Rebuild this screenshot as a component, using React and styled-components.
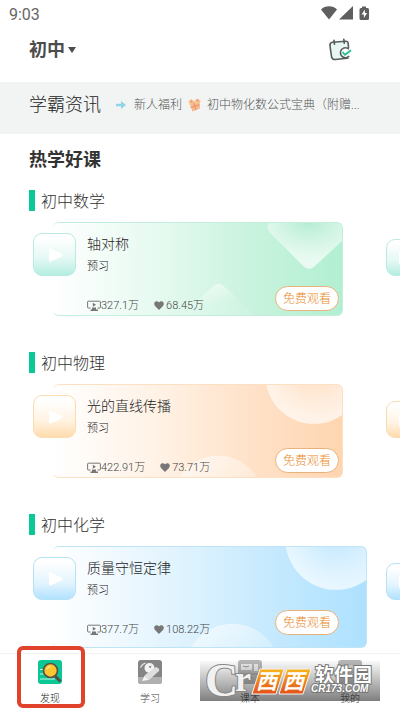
import React, { useState } from "react";
import styled, { createGlobalStyle } from "styled-components";

const themes = {
  green: {
    card: "linear-gradient(90deg, #ffffff 0%, #e3f9ee 40%, #c9f3de 68%, #b2efd2 100%)",
    line: "#c3eede",
    cover: "linear-gradient(180deg, #ffffff 10%, #e4f8f4 60%, #b4eee0 100%)",
    coverLine: "#b9ebe2",
    glow: "#b5edd2",
  },
  orange: {
    card: "linear-gradient(90deg, #ffffff 0%, #fff0e2 40%, #ffe2c9 68%, #fed5b0 100%)",
    line: "#fbe0c4",
    cover: "linear-gradient(180deg, #ffffff 10%, #fff3e2 60%, #ffdcae 100%)",
    coverLine: "#fbdcae",
    glow: "#ffd9b8",
  },
  blue: {
    card: "linear-gradient(90deg, #ffffff 0%, #e0f3fe 40%, #c7eafe 68%, #ade1ff 100%)",
    line: "#bfe4f5",
    cover: "linear-gradient(180deg, #ffffff 10%, #e3f4fe 60%, #b2e2ff 100%)",
    coverLine: "#b5e2f5",
    glow: "#b5e3fe",
  },
};

const courses = [
  {
    subject: "初中数学",
    title: "轴对称",
    tag: "预习",
    views: "327.1万",
    likes: "68.45万",
    color: "green",
  },
  {
    subject: "初中物理",
    title: "光的直线传播",
    tag: "预习",
    views: "422.91万",
    likes: "73.71万",
    color: "orange",
  },
  {
    subject: "初中化学",
    title: "质量守恒定律",
    tag: "预习",
    views: "377.7万",
    likes: "108.22万",
    color: "blue",
    wide: true,
  },
];

const App = () => {
  const [grade, setGrade] = useState("初中");
  return (
    <>
      <GlobalStyle />
      <Page>
        <StatusBar>
          <span>9:03</span>
          <StatusIcons />
        </StatusBar>
        <Header>
          <GradePicker>
            <select
              aria-label="年级"
              value={grade}
              onChange={(e) => setGrade(e.target.value)}
            >
              <option>小学</option>
              <option>初中</option>
              <option>高中</option>
            </select>
            <svg width="8" height="6" viewBox="0 0 8 6">
              <path d="M0 0H8L4 6Z" fill="#4c4c4c" />
            </svg>
          </GradePicker>
          <IconButton aria-label="签到">
            <CalendarIcon />
          </IconButton>
        </Header>
        <News>
          <h2>学霸资讯</h2>
          <NewsLink href="#news">
            <ArrowIcon />
            <span>新人福利</span>
            <GiftIcon />
            <NewsText>初中物化数公式宝典（附赠...</NewsText>
          </NewsLink>
        </News>
        <Main>
          <h1>热学好课</h1>
          {courses.map((course) => (
            <Course course={course} key={course.subject} />
          ))}
        </Main>
        <BottomNav />
      </Page>
    </>
  );
};

const Course = ({ course }) => {
  const theme = themes[course.color];
  return (
    <Section>
      <h3>{course.subject}</h3>
      <Slider>
        <Cover $theme={theme} aria-label="播放">
          <PlayIcon />
        </Cover>
        <Card $theme={theme} $wide={course.wide}>
          <CardArt color={course.color} glow={theme.glow} />
          <CardTitle>{course.title}</CardTitle>
          <CardTag>{course.tag}</CardTag>
          <Stats>
            <ViewsIcon />
            <span>{course.views}</span>
            <HeartIcon />
            <span>{course.likes}</span>
            <WatchButton>免费观看</WatchButton>
          </Stats>
        </Card>
        <NextCover $theme={theme} aria-label="下一课">
          <PlayIcon />
        </NextCover>
      </Slider>
    </Section>
  );
};

const BottomNav = () => {
  return (
    <Nav>
      <NavItem href="#discover" $active>
        <DiscoverIcon />
        <span>发现</span>
        <Highlight />
      </NavItem>
      <NavItem href="#study">
        <StudyIcon />
        <span>学习</span>
      </NavItem>
      <NavItem href="#books">
        <BookIcon />
        <span>课本</span>
      </NavItem>
      <NavItem href="#me">
        <MeIcon />
        <span>我的</span>
      </NavItem>
      <Watermark>
        <WatermarkLogo />
      </Watermark>
    </Nav>
  );
};

//Icons
const StatusIcons = () => (
  <svg width="50" height="16" viewBox="0 0 50 16" fill="#5f5f5f">
    <path d="M1 4.5C5 0.2 13 0.2 17 4.5L9 14.5Z" />
    <path d="M19 14.5L33 1V14.5Z" />
    <path d="M42 1.5h4v1.500h1.500q1.500 0 1.500 1.500v9q0 1.500-1.500 1.500h-6.500q-1.500 0-1.500-1.500v-9q0-1.500 1.500-1.500h1z" />
    <path d="M44.900 4.500L41.600 9.400H43.900V13L47.100 8H44.900Z" fill="#fff" />
  </svg>
);

const CalendarIcon = () => (
  <svg width="24" height="24" viewBox="0 0 24 24" fill="none">
    <path
      d="M4.500 4.300L17.500 3.200Q20 3 20.200 5.500L21 17.500Q21.200 20 18.800 20.300L7.500 21.500Q4.300 21.800 3.600 19L2 8Q1.700 4.600 4.500 4.300Z"
      fill="#e8f7f4"
      stroke="#555c5b"
      strokeWidth="1.600"
    />
    <path
      d="M6 2.200L6.500 6.300M15.800 1.200L16.300 5.300"
      stroke="#555c5b"
      strokeWidth="1.600"
      strokeLinecap="round"
    />
    <path d="M17.500 10H24V20H17.500Z" fill="#fff" />
    <path
      d="M21 11.200A5 5 0 1 0 21.200 18"
      fill="#fff"
      stroke="#555c5b"
      strokeWidth="1.600"
    />
    <path d="M14.500 14.200L17 16.800L23 12.200" stroke="#1fc397" strokeWidth="1.900" />
  </svg>
);

const ArrowIcon = () => (
  <svg width="10" height="8" viewBox="0 0 10 8">
    <path d="M0 2.800H5V0L10 4L5 8V5.200H0Z" fill="#8fd3e6" />
  </svg>
);

const GiftIcon = () => (
  <svg width="13" height="14" viewBox="0 0 13 14">
    <path d="M1.500 5.500L11.500 4L12 10.500L4.500 13.500Z" fill="#f6b98a" />
    <path d="M0.500 3L3.500 1L6 3.500L9 0.500L12.500 2.500L12 5L2 7.500Z" fill="#f8c58f" />
    <path d="M5.500 4.500L8 12M2.500 9.500L11.500 6.800" stroke="#ea8f72" />
    <circle cx="3.500" cy="3.500" r="1" fill="#ea8f72" />
    <circle cx="9.500" cy="2.500" r="1" fill="#ea8f72" />
  </svg>
);

const PlayIcon = () => (
  <svg width="16" height="16" viewBox="0 0 16 16">
    <path
      d="M1 2.800Q1 1 2.700 1.600L14 6.800Q16 8 14 9.200L2.700 14.400Q1 15 1 13.200Z"
      fill="#fff"
    />
  </svg>
);

const ViewsIcon = () => (
  <svg width="14" height="12" viewBox="0 0 14 12" fill="none">
    <path
      d="M3.500 8H1.200Q0.600 8 0.600 7.400V2Q0.600 1.200 1.400 1.200H12.600Q13.400 1.200 13.400 2V7.400Q13.400 8 12.800 8H10.500"
      stroke="#777"
    />
    <path d="M5.800 2.800L9 4.800L5.800 6.800Z" fill="#777" />
    <path d="M5 7.500H9V9.500H11V11H3.500V9.500H5Z" fill="#777" />
  </svg>
);

const HeartIcon = () => (
  <svg width="10" height="9" viewBox="0 0 10 9">
    <path
      d="M5 9L1 5C-0.600 3 0.300 0.300 2.600 0.200C3.800 0.200 4.500 0.800 5 1.500C5.500 0.800 6.200 0.200 7.400 0.200C9.700 0.300 10.600 3 9 5Z"
      fill="#777"
    />
  </svg>
);

const CardArt = ({ color, glow }) => {
  const box = color === "blue" ? "0 0 314 101" : "0 0 290 94";
  return (
    <Art viewBox={box} preserveAspectRatio="xMaxYMin slice" aria-hidden="true">
      <defs>
        <radialGradient id={"top-" + color} cx="0.55" cy="0" r="0.85">
          <stop offset="0" stopColor={glow} />
          <stop offset="1" stopColor="#fff" stopOpacity="0.7" />
        </radialGradient>
        <radialGradient id={"ball-" + color} cx="0.5" cy="0.4" r="0.6">
          <stop offset="0" stopColor={glow} />
          <stop offset="1" stopColor="#fff" stopOpacity="0.7" />
        </radialGradient>
        <linearGradient id={"low-" + color} x1="0" y1="0" x2="0.4" y2="1">
          <stop offset="0" stopColor="#fff" stopOpacity="0.65" />
          <stop offset="0.700" stopColor="#fff" stopOpacity="0.1" />
        </linearGradient>
      </defs>
      {color === "green" && (
        <>
          <path
            d="M216 0Q214 5 217 9L252 44Q257 48 262 44L290 18V0Z"
            fill="url(#top-green)"
          />
          <path d="M128 94L161 63Q166 59 171 63L204 94Z" fill="url(#low-green)" />
        </>
      )}
      {color === "orange" && (
        <>
          <circle cx="262" cy="-10" r="49" fill="url(#ball-orange)" />
          <circle cx="166" cy="117" r="46" fill="url(#low-orange)" />
        </>
      )}
      {color === "blue" && (
        <>
          <circle cx="284" cy="-8" r="51" fill="url(#ball-blue)" />
          <circle cx="180" cy="125" r="48" fill="url(#low-blue)" />
        </>
      )}
    </Art>
  );
};

const DiscoverIcon = () => (
  <svg width="24" height="24" viewBox="0 0 24 24" fill="none">
    <rect width="24" height="24" rx="3" fill="#09c895" />
    <path d="M2 9.500H6M2 14H7M2 19H17" stroke="#c9f5e8" strokeWidth="1.200" />
    <path d="M17 16L22.500 21.500" stroke="#5a4a45" strokeWidth="3" />
    <circle cx="12.500" cy="10.500" r="7" fill="#fdc62f" stroke="#5c5148" strokeWidth="1.700" />
    <path d="M9 9Q10 6.800 12.500 6.500" stroke="#fff0b8" strokeWidth="1.200" />
  </svg>
);

const StudyIcon = () => (
  <svg width="24" height="24" viewBox="0 0 24 24" fill="none">
    <rect width="24" height="24" rx="3" fill="#858585" />
    <path d="M0 17H24V21Q24 24 21 24H3Q0 24 0 21Z" fill="#b0b0b0" />
    <path d="M2.500 7.500Q4 4 7.500 3" stroke="#e8e8e8" strokeWidth="1.300" />
    <circle cx="11.500" cy="8" r="5" fill="#f3f3f3" />
    <path d="M10.500 6.500L13.500 5.500L12.500 8.500Z" fill="#8a8a8a" />
    <path d="M18 7Q22 8 21 11L11 20L5 20L7 15Z" fill="#dedede" />
    <path d="M4 21L6.500 16L10 20Z" fill="#f5f5f5" />
  </svg>
);

const BookIcon = () => (
  <svg width="24" height="24" viewBox="0 0 24 24" fill="none">
    <rect width="24" height="24" rx="3" fill="#b4b4b4" />
    <path d="M3 4H14V10H3ZM16 4H20V11H16Z" fill="#ededed" />
    <path d="M5 6Q8 8 11 6M3 14H20M3 18H15" stroke="#909090" />
  </svg>
);

const MeIcon = () => (
  <svg width="24" height="24" viewBox="0 0 24 24" fill="none">
    <rect width="24" height="24" rx="3" fill="#b4b4b4" />
    <circle cx="12" cy="11" r="6" fill="#d4d4d4" />
    <path d="M9 12Q12 15 15 12" stroke="#909090" />
  </svg>
);

const WatermarkLogo = () => (
  <svg width="180" height="40" viewBox="0 0 180 40" overflow="visible">
    <defs>
      <linearGradient id="plate" x1="0" y1="0" x2="0" y2="1">
        <stop offset="0" stopColor="#f9b51d" />
        <stop offset="1" stopColor="#e4501a" />
      </linearGradient>
    </defs>
    <g
      stroke="#868686"
      strokeWidth="2"
      paintOrder="stroke"
      fill="#f1f1f1"
      fontFamily="Liberation Serif, serif"
      fontWeight="700"
    >
      <text x="5" y="35" fontSize="46">
        C
      </text>
      <text x="35" y="30" fontSize="36">
        r
      </text>
    </g>
    <path d="M60 8H84L76 33H52Z" fill="url(#plate)" stroke="#f4f4f4" />
    <path d="M87 8H111L103 33H79Z" fill="url(#plate)" stroke="#f4f4f4" />
    <g
      fill="#fff"
      fontFamily="Noto Sans CJK SC, sans-serif"
      fontWeight="700"
    >
      <g fontSize="21" fontStyle="italic">
        <text x="56" y="28">
          西
        </text>
        <text x="83" y="28">
          西
        </text>
      </g>
      <g stroke="#777" strokeWidth="2" paintOrder="stroke">
        <text x="115" y="21" fontSize="19">
          软件园
        </text>
        <text
          x="111"
          y="31"
          fontFamily="Liberation Sans, sans-serif"
          fontSize="10"
          fontStyle="italic"
        >
          CR173.COM
        </text>
      </g>
    </g>
  </svg>
);

//Styles
const GlobalStyle = createGlobalStyle`
  * {
    margin: 0;
    padding: 0;
    box-sizing: border-box;
  }
  body {
    background: #fff;
    color: #4c4c4c;
    font-family: Roboto, "Noto Sans CJK SC", sans-serif;
    font-weight: 300;
    overflow-x: hidden;
  }
  button, select {
    font: inherit;
    color: inherit;
    border: none;
    background: none;
  }
  a {
    color: inherit;
    text-decoration: none;
  }
  svg {
    display: block;
    flex: none;
  }
`;

const Page = styled.div`
  min-height: 100vh;
  display: flex;
  flex-direction: column;
`;

const StatusBar = styled.div`
  display: flex;
  align-items: center;
  justify-content: space-between;
  height: 28px;
  padding: 0 30px 0 9px;
  font-size: 16px;
  font-weight: 400;
  color: #666;
  svg {
    margin-bottom: 2px;
  }
`;

const Header = styled.header`
  display: flex;
  align-items: center;
  justify-content: space-between;
  height: 54px;
  padding: 0 48px 10px 29px;
`;

const GradePicker = styled.label`
  display: flex;
  align-items: center;
  gap: 3px;
  select {
    appearance: none;
    font-size: 18px;
    font-weight: 700;
    line-height: 26px;
  }
`;

const IconButton = styled.button`
  display: flex;
`;

const News = styled.section`
  display: flex;
  align-items: center;
  gap: 15px;
  height: 52px;
  padding: 0 28px 6px 29px;
  background: #f2f4f4;
  h2 {
    flex: none;
    font-size: 18px;
    font-weight: 300;
    line-height: 26px;
    color: #222;
  }
`;

const NewsLink = styled.a`
  display: flex;
  align-items: center;
  flex: 1;
  min-width: 0;
  font-size: 12px;
  line-height: 18px;
  color: #555;
  span {
    flex: none;
    margin: 0 6px 0 8px;
  }
`;

const NewsText = styled.p`
  min-width: 0;
  margin-left: 6px;
  overflow: hidden;
  white-space: nowrap;
  text-overflow: ellipsis;
`;

const Main = styled.main`
  display: flex;
  flex-direction: column;
  gap: 36px;
  padding: 13px 0 5px;
  h1 {
    margin-bottom: -19px;
    padding-left: 29px;
    font-size: 18px;
    font-weight: 700;
    line-height: 26px;
    color: #333;
  }
`;

const Section = styled.section`
  h3 {
    margin: 0 0 11px 29px;
    padding: 2px 0 0 6px;
    border-left: 6px solid #0bc996;
    font-size: 16px;
    font-weight: 300;
    line-height: 19px;
    color: #333;
  }
`;

const Slider = styled.div`
  display: flex;
  align-items: flex-start;
  padding-left: 33px;
  overflow: hidden;
`;

const Cover = styled.button`
  display: flex;
  align-items: center;
  justify-content: center;
  flex: none;
  z-index: 1;
  width: 43px;
  height: 43px;
  margin: 11px -23px 0 0;
  padding-left: 3px;
  border: 1px solid ${(props) => props.$theme.coverLine};
  border-radius: 9px;
  background: ${(props) => props.$theme.cover};
`;

const NextCover = styled(Cover)`
  width: 37px;
  height: 37px;
  margin-top: 17px;
`;

const Card = styled.article`
  position: relative;
  flex: 1;
  min-width: 0;
  margin-right: ${(props) => (props.$wide ? 19 : 43)}px;
  padding: ${(props) => (props.$wide ? "11px 27px 10px 34px" : "11px 3px 2px 34px")};
  border: 1px solid ${(props) => props.$theme.line};
  border-left: none;
  border-radius: 6px;
  background: ${(props) => props.$theme.card};
  overflow: hidden;
`;

const Art = styled.svg`
  position: absolute;
  inset: 0;
  width: 100%;
  height: 100%;
`;

const CardTitle = styled.h4`
  position: relative;
  font-size: 14px;
  font-weight: 300;
  line-height: 20px;
  color: #222;
`;

const CardTag = styled.p`
  position: relative;
  margin: 5px 0 11px;
  font-size: 11px;
  line-height: 16px;
  color: #222;
`;

const Stats = styled.div`
  position: relative;
  display: flex;
  align-items: flex-end;
  font-size: 11px;
  line-height: 14px;
  color: #444;
  svg {
    margin-bottom: 1px;
  }
  span + svg {
    margin: 0 2px 3px 15px;
  }
`;

const WatchButton = styled.button`
  width: 64px;
  height: 25px;
  margin: 0 0 2px auto;
  border: 1px solid #e9b27a;
  border-radius: 13px;
  background: #fff;
  color: #e98a2c;
  font-size: 12px;
  line-height: 18px;
  white-space: nowrap;
`;

const Nav = styled.nav`
  position: sticky;
  bottom: 0;
  z-index: 2;
  display: flex;
  height: 58px;
  margin-top: auto;
  border-top: 1px solid #f3f3f3;
  background: #fff;
`;

const NavItem = styled.a`
  position: relative;
  display: flex;
  flex-direction: column;
  align-items: center;
  gap: 8px;
  flex: 1;
  padding-top: 6px;
  font-size: 10px;
  line-height: 14px;
  color: ${(props) => (props.$active ? "#222" : "#444")};
`;

const Highlight = styled.i`
  position: absolute;
  top: -8px;
  left: 17px;
  right: 15px;
  height: 62px;
  border: 4px solid #e0422c;
  border-radius: 6px;
`;

const Watermark = styled.div`
  position: absolute;
  right: 20px;
  bottom: 10px;
  background: linear-gradient(
    180deg,
    rgba(200, 200, 200, 0.1),
    rgba(0, 0, 0, 0.5)
  );
`;

export default App;
